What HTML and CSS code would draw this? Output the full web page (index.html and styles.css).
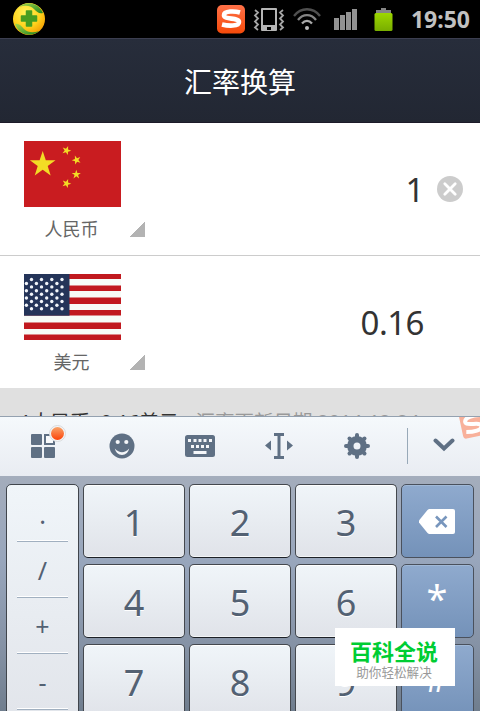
FILE: index.html
```html
<!DOCTYPE html>
<html lang="zh-CN">
<head>
    <meta charset="UTF-8">
    <meta name="viewport" content="width=device-width, initial-scale=1.0">
    <title>汇率换算</title>
    <link rel="stylesheet" href="styles.css">
</head>
<body>
    <div class="status-bar">
        <svg class="app-icon" width="34" height="34" viewBox="0 0 34 34">
            <defs>
                <radialGradient id="ball" cx="0.4" cy="0.3" r="0.75">
                    <stop offset="0" stop-color="#fff45a"/>
                    <stop offset="0.6" stop-color="#ffd21c"/>
                    <stop offset="1" stop-color="#f49a00"/>
                </radialGradient>
                <linearGradient id="leaf" x1="0" y1="0" x2="1" y2="1">
                    <stop offset="0" stop-color="#a5d84a"/>
                    <stop offset="1" stop-color="#1f8420"/>
                </linearGradient>
            </defs>
            <circle cx="17" cy="17" r="16" fill="url(#ball)"/>
            <path d="M7 5C15-2 27 1 31 11c-4 1-6-1-9-4C18 3 13 3 7 5z" fill="url(#leaf)"/>
            <path d="M27 29C19 36 7 33 3 22c4-1 6 2 9 5 4 4 10 4 15 2z" fill="url(#leaf)"/>
            <path d="M14.500 9h5v5h5v5h-5v5h-5v-5h-5v-5h5z" fill="#479d20" stroke="#479d20" stroke-width="1.500" stroke-linejoin="round"/>
        </svg>
        <div class="status-icons">
            <svg width="28" height="29" viewBox="0 0 28 29">
                <defs>
                    <linearGradient id="orange" x1="0" y1="0" x2="0" y2="1">
                        <stop offset="0" stop-color="#ff7148"/>
                        <stop offset="1" stop-color="#f54a0a"/>
                    </linearGradient>
                </defs>
                <rect width="28" height="28.500" rx="5" fill="url(#orange)"/>
                <path d="M23 7.500c-5-1.500-16-2-16 2.700 0 4.600 15 2.200 15 6.800 0 4.700-11 4-17 2.500" fill="none" stroke="#fff" stroke-width="4.600"/>
            </svg>
            <svg class="vibrate" width="32" height="26" viewBox="0 0 32 26">
                <path fill-rule="evenodd" d="M9 1h14q1 0 1 1v21q0 1-1 1H9q-1 0-1-1V2q0-1 1-1zM10 3v15h12V3zM14 20v3h4v-3z" fill="#b5b5b5"/>
                <path d="M2 3l3 2.500-3 3 3 3-3 3 3 3-3 3 3 2.500M30 3l-3 2.500 3 3-3 3 3 3-3 3 3 3-3 2.500" fill="none" stroke="#a5a5a5" stroke-width="1.800"/>
            </svg>
            <svg class="wifi" width="28" height="24" viewBox="0 0 28 24">
                <g fill="none" stroke-width="2.300">
                    <path d="M1 9C8 0 20 0 27 9" stroke="#505050"/>
                    <path d="M5 13C10 6.500 18 6.500 23 13" stroke="#858585"/>
                    <path d="M9 16.500c3-3.500 7-3.500 10 0" stroke="#aaa"/>
                </g>
                <circle cx="14" cy="21" r="2" fill="#bbb"/>
            </svg>
            <svg class="signal" width="24" height="22" viewBox="0 0 24 22">
                <path d="M0 10h5v12H0zM6 7h5v15H6zM12 4h5v18h-5zM18 1h5v21h-5z" fill="#929292"/>
            </svg>
            <svg class="battery" width="19" height="25" viewBox="0 0 19 25">
                <defs>
                    <linearGradient id="charge" x1="0" y1="0" x2="0" y2="1">
                        <stop offset="0" stop-color="#9dd700"/>
                        <stop offset="1" stop-color="#78ad00"/>
                    </linearGradient>
                </defs>
                <path d="M2 6V3h5V1h5v2h5v3" fill="#858585"/>
                <rect x="0.500" y="6" width="18" height="18" rx="1.500" fill="url(#charge)"/>
            </svg>
            <span class="clock">19:50</span>
        </div>
    </div>
    <header>
        <h1>汇率换算</h1>
    </header>
    <main>
        <section class="currency">
            <div class="picker">
                <svg class="flag" width="97" height="66" viewBox="0 0 97 66">
                    <defs>
                        <path id="star" d="M0-10L2.300-3.100H9.500L3.700 1.200 5.900 8.100 0 3.900-5.900 8.100-3.700 1.200-9.500-3.100H-2.300z"/>
                    </defs>
                    <rect width="97" height="66" fill="#c91c20"/>
                    <g fill="#f3dc25">
                        <use href="#star" transform="translate(18.700 23.500) scale(1.350)"/>
                        <use href="#star" transform="translate(42.500 9.500) rotate(20) scale(0.480)"/>
                        <use href="#star" transform="translate(52.500 19) rotate(-20) scale(0.480)"/>
                        <use href="#star" transform="translate(52.300 33.500) scale(0.480)"/>
                        <use href="#star" transform="translate(42.500 42.500) rotate(20) scale(0.480)"/>
                    </g>
                </svg>
                <div class="name">人民币</div>
            </div>
            <span class="corner"></span>
            <span class="amount">1</span>
            <svg class="clear" width="26" height="26" viewBox="0 0 26 26">
                <circle cx="13" cy="13" r="13" fill="#ccc"/>
                <path d="M7.800 7.800l10.400 10.400M18.200 7.800L7.800 18.200" stroke="#fff" stroke-width="2.800" stroke-linecap="round"/>
            </svg>
        </section>
        <section class="currency">
            <div class="picker">
                <svg class="flag" width="97" height="66" viewBox="0 0 97 66">
                    <rect width="97" height="66" fill="#f7fbf7"/>
                    <path d="M0 0h97v5H0zM0 11.500h97v5.500H0zM0 23.500h97V30H0zM0 36h97v5.500H0zM0 48.500h97V55H0zM0 60.500h97V66H0z" fill="#c1191f"/>
                    <rect width="45.500" height="41.700" fill="#243459"/>
                    <g fill="#f2f5fa">
                        <g id="star-row">
                            <circle cx="7.500" cy="5.500" r="1.700"/>
                            <circle cx="17.500" cy="5.500" r="1.700"/>
                            <circle cx="27.800" cy="5.500" r="1.700"/>
                            <circle cx="38" cy="5.500" r="1.700"/>
                        </g>
                        <use href="#star-row" y="7.400"/>
                        <use href="#star-row" y="14.700"/>
                        <use href="#star-row" y="22"/>
                        <use href="#star-row" y="29.300"/>
                        <use href="#star-row" x="-5.100" y="4"/>
                        <use href="#star-row" x="-5.100" y="11.200"/>
                        <use href="#star-row" x="-5.100" y="18.500"/>
                        <use href="#star-row" x="-5.100" y="25.800"/>
                    </g>
                </svg>
                <div class="name">美元</div>
            </div>
            <span class="corner"></span>
            <span class="amount">0.16</span>
        </section>
        <div class="rate"><span class="rate-value">1人民币=0.16美元</span><span class="rate-date">汇率更新日期 2014-12-24</span></div>
    </main>

    <div class="toolbar">
        <div class="tool">
            <svg width="36" height="36" viewBox="0 0 36 36">
                <defs>
                    <linearGradient id="dot" x1="0" y1="0" x2="0" y2="1">
                        <stop offset="0" stop-color="#f8a46a"/>
                        <stop offset="1" stop-color="#fc4208"/>
                    </linearGradient>
                </defs>
                <g fill="#5f7084">
                    <rect x="1" y="10" width="11" height="11" rx="1"/>
                    <rect x="1" y="23" width="11" height="11" rx="1"/>
                    <rect x="14" y="23" width="11" height="11" rx="1"/>
                </g>
                <rect x="15" y="11" width="9" height="9" fill="#f7f9fb" stroke="#5f7084" stroke-width="2"/>
                <circle cx="27.500" cy="9.500" r="8" fill="#f5f6f7" stroke="#d8dadd"/>
                <circle cx="27.500" cy="9.500" r="6.500" fill="url(#dot)"/>
            </svg>
        </div>
        <div class="tool">
            <svg width="26" height="26" viewBox="0 0 26 26">
                <circle cx="13" cy="13" r="12.500" fill="#5f7084"/>
                <circle cx="8.700" cy="9" r="2.100" fill="#f4f6f9"/>
                <circle cx="17.300" cy="9" r="2.100" fill="#f4f6f9"/>
                <path d="M5.800 15.500q7.200 7.500 14.400 0-1.500 6.500-7.200 6.500t-7.200-6.500z" fill="#f4f6f9"/>
            </svg>
        </div>
        <div class="tool">
            <svg width="30" height="22" viewBox="0 0 30 22">
                <rect width="30" height="22" rx="2.500" fill="#5f7084"/>
                <path d="M3 4h3v3H3zM8.500 4h3v3h-3zM13.500 4h3v3h-3zM18.500 4h3v3h-3zM24 4h3v3h-3zM6 10h3v3H6zM11 10h3v3h-3zM16 10h3v3h-3zM21 10h3v3h-3zM8.500 16h13v3h-13z" fill="#f4f6f9"/>
            </svg>
        </div>
        <div class="tool">
            <svg width="28" height="26" viewBox="0 0 28 26">
                <path d="M9 0h10v3h-3.500v20H19v3H9v-3h3.500V3H9zM6 7.500v10l-6-5zM22 7.500v10l6-5z" fill="#5f7084"/>
            </svg>
        </div>
        <div class="tool">
            <svg width="26" height="26" viewBox="0 0 26 26">
                <circle cx="13" cy="13" r="6.700" fill="none" stroke="#5f7084" stroke-width="6.400"/>
                <path d="M13 2v3M13 21v3M2 13h3M21 13h3M5.500 5.500l1.500 1.500M19 19l1.500 1.500M20.500 5.500L19 7M7 19l-1.500 1.500" stroke="#5f7084" stroke-width="4" stroke-linecap="round"/>
            </svg>
        </div>
        <div class="tool hide-keyboard">
            <svg width="22" height="14" viewBox="0 0 22 14">
                <path d="M2.500 2.500l8.500 8 8.500-8" fill="none" stroke="#5f7084" stroke-width="4" stroke-linecap="round"/>
            </svg>
        </div>
        <svg class="sogou" width="21" height="22" viewBox="0 0 21 22">
            <g transform="rotate(-12 14 8)">
                <rect x="2" y="-6" width="27" height="26" rx="3" fill="#f8b19b"/>
                <path d="M24 0C16-2 7-1 7 3.500 7 8 22 6 22 10.500S13 15 6 13.500" fill="none" stroke="#fff" stroke-width="4"/>
            </g>
        </svg>
    </div>

    <div class="keyboard">
        <div class="symbols">
            <div class="symbol dot">.</div>
            <div class="symbol">/</div>
            <div class="symbol">+</div>
            <div class="symbol">-</div>
        </div>
        <div class="keys">
            <div class="key">1</div>
            <div class="key">2</div>
            <div class="key">3</div>
            <div class="key blue">
                <svg width="36" height="25" viewBox="0 0 36 25">
                    <path d="M10.500 0H34q2 0 2 2v21q0 2-2 2H10.500Q9.500 25 8.500 24L0 13.500v-2L8.500 1q1-1 2-1z" fill="#fff"/>
                    <path d="M17 7.500l10.500 10.500M27.500 7.500L17 18" stroke="#7896bd" stroke-width="2.600"/>
                </svg>
            </div>
            <div class="key">4</div>
            <div class="key">5</div>
            <div class="key">6</div>
            <div class="key blue star">*</div>
            <div class="key">7</div>
            <div class="key">8</div>
            <div class="key">9</div>
            <div class="key blue hash">#</div>
        </div>
    </div>

    <div class="watermark">
        <div class="watermark-title">百科全说</div>
        <div class="watermark-text">助你轻松解决</div>
    </div>
</body>
</html>
```
FILE: styles.css
```css
* {
    box-sizing: border-box;
}
body {
    font-family: "Noto Sans", "Noto Sans CJK SC", sans-serif;
    margin: 0;
    width: 480px;
    height: 711px;
    overflow: hidden;
    position: relative;
    background-color: #fff;
}
svg {
    display: block;
    flex: none;
}
.status-bar {
    display: flex;
    justify-content: space-between;
    align-items: center;
    height: 38px;
    padding: 0 10px 0 12px;
    background-color: #000;
}
.status-icons {
    display: flex;
    align-items: center;
}
.status-icons svg {
    margin-right: 8px;
}
.status-icons .vibrate {
    margin: 2px 8px 0 0;
}
.status-icons .wifi {
    margin-right: 13px;
}
.status-icons .signal {
    margin-right: 16px;
}
.status-icons .battery {
    margin-right: 18px;
}
.clock {
    color: #c1c1c1;
    font-size: 23px;
    font-weight: bold;
    line-height: 38px;
}
header {
    display: flex;
    justify-content: center;
    align-items: center;
    height: 85px;
    border-top: 1px solid #3c3e50;
    border-bottom: 1px solid #1c1a29;
    background: linear-gradient(#272d3b, #222733);
}
h1 {
    margin: 0;
    color: #fff;
    font-family: "Noto Sans CJK SC", sans-serif;
    font-size: 28px;
    font-weight: normal;
    line-height: 40px;
}
.currency {
    display: flex;
    height: 133px;
    padding: 18px 17px 0 24px;
    border-bottom: 1px solid #ccc;
}
.currency + .currency {
    height: 132px;
    border-bottom: none;
}
.picker {
    width: 97px;
}
.name {
    margin-top: 7px;
    padding-right: 2px;
    color: #666;
    font-family: "Noto Sans CJK SC", sans-serif;
    font-size: 18px;
    line-height: 28px;
    text-align: center;
}
.corner {
    width: 15px;
    height: 15px;
    margin: 81px 0 0 9px;
    background: linear-gradient(135deg, transparent 50%, #b3b3b3 50%);
}
.amount {
    width: 279px;
    margin-top: 25px;
    color: #333;
    font-size: 33px;
    letter-spacing: -0.5px;
    line-height: 48px;
    text-align: right;
}
.clear {
    margin: 35px 0 0 13px;
}
.rate {
    height: 28px;
    padding: 21px 0 0 20px;
    overflow: hidden;
    background-color: #e0e0e0;
    color: #333;
    font-size: 19.5px;
    line-height: 26px;
    white-space: nowrap;
}
.rate-date {
    margin-left: 17px;
    color: #999;
}
.toolbar {
    display: flex;
    position: relative;
    height: 60px;
    padding-left: 4px;
    border-top: 1px solid #94a1b0;
    background: linear-gradient(#f5f9fc, #e9ecf2);
}
.tool {
    display: flex;
    flex: none;
    justify-content: center;
    align-items: center;
    width: 78.5px;
    padding-bottom: 2px;
}
.tool:first-child {
    padding: 0 0 9px 10px;
}
.hide-keyboard {
    width: 74px;
    height: 36px;
    margin: 11px 0 0 10px;
    border-left: 1px solid #98a9b8;
}
.sogou {
    position: absolute;
    top: 0;
    right: 0;
}
.keyboard {
    display: flex;
    gap: 4px;
    height: 243px;
    padding: 8px 6px 0;
    background: linear-gradient(#a4adbc, #98a6bc 35%, #8592a5 70%, #6d7b8b);
}
.symbols {
    width: 73px;
    height: 260px;
    padding: 1px 10px 0;
    border: 1px solid #40454c;
    border-radius: 5px;
    background: linear-gradient(#f0f5f9, #e0e3e9);
}
.symbol {
    height: 56px;
    padding-top: 9px;
    border-bottom: 1px solid #a1b0c0;
    box-shadow: inset 0 -1px #fff;
    color: #536173;
    font-size: 25px;
    line-height: 38px;
    text-align: center;
}
.symbol.dot {
    padding-top: 11px;
    line-height: 34px;
}
.keys {
    display: grid;
    grid-template-columns: 102px 102px 102px 73px;
    grid-auto-rows: 74px;
    gap: 6px 4px;
}
.key {
    display: flex;
    justify-content: center;
    align-items: center;
    padding-top: 3px;
    border: 1px solid #44484e;
    border-bottom-color: #1c2026;
    border-radius: 5px;
    background: linear-gradient(#f0f5f9, #e0e3e9);
    box-shadow: inset 0 1px #fff, inset 0 -1px #f2f4f6;
    color: #536173;
    font-size: 36px;
    line-height: 40px;
    text-shadow: 0 1px #fff;
}
.key.blue {
    padding: 0 2px 0 0;
    border-color: #4a515d;
    background: linear-gradient(#8faace, #7492b9);
    box-shadow: inset 0 1px #a0b8d6;
    color: #fff;
    text-shadow: none;
}
.key.star {
    padding: 0 1px 6px 0;
    font-size: 38px;
}
.key.hash {
    padding: 0 2px 4px 0;
}
.watermark {
    position: absolute;
    left: 335px;
    top: 628px;
    width: 120px;
    height: 58px;
    padding: 7px 2px 0 0;
    background-color: #fff;
    text-align: center;
}
.watermark-title {
    color: #00cd33;
    font-family: "Noto Sans CJK SC", sans-serif;
    font-size: 22px;
    font-weight: bold;
    line-height: 31px;
}
.watermark-text {
    color: #999;
    font-size: 12.6px;
    line-height: 14px;
}
```
